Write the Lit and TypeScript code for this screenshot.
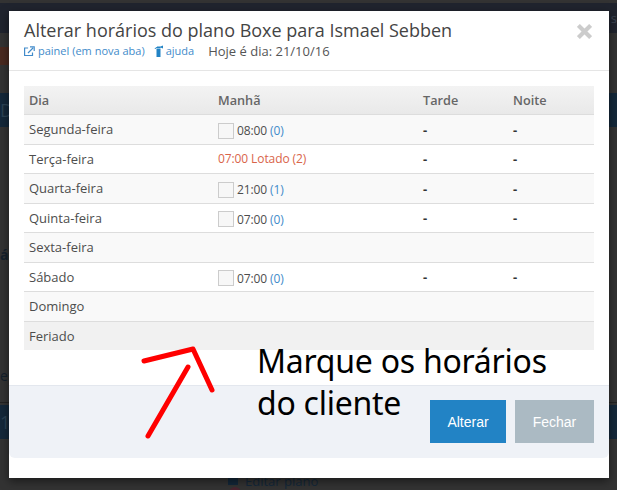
import { LitElement, html, css } from "lit";
import { customElement } from "lit/decorators.js";

type Row = { day: string; slot?: [string, string]; full?: string; dashes?: boolean };

const rows: Row[] = [
  { day: "Segunda-feira", slot: ["08:00", "(0)"], dashes: true },
  { day: "Terça-feira", full: "07:00 Lotado (2)", dashes: true },
  { day: "Quarta-feira", slot: ["21:00", "(1)"], dashes: true },
  { day: "Quinta-feira", slot: ["07:00", "(0)"], dashes: true },
  { day: "Sexta-feira" },
  { day: "Sábado", slot: ["07:00", "(0)"], dashes: true },
  { day: "Domingo" },
  { day: "Feriado" },
];

@customElement("app-root")
export class AppRoot extends LitElement {
  static styles = css`
    :host {
      display: block;
      position: relative;
      width: 617px;
      height: 490px;
      overflow: hidden;
      background: #333;
      font-family: "Open Sans", sans-serif;
      color: #4d4d4d;
    }
    /* page behind the dimmed overlay */
    .back {
      display: flex;
      flex-direction: column;
      height: 490px;
    }
    .top {
      height: 30px;
      margin-top: 3px;
      background: #20242e;
      flex: none;
      text-align: right;
      color: #3d4452;
      font-size: 13px;
      line-height: 30px;
    }
    .mark {
      width: 9px;
      height: 18px;
      margin-top: 14px;
      background: #4a2a20;
      flex: none;
    }
    .band {
      height: 34px;
      background: #14283a;
      flex: none;
      color: #2b4254;
      font-size: 18px;
      line-height: 34px;
    }
    .band.one {
      margin-top: 28px;
    }
    .rule {
      height: 1px;
      margin-top: 275px;
      background: #222;
      flex: none;
    }
    .band.two {
      margin-top: 2px;
    }
    .ghost {
      position: absolute;
      left: 0;
      font-size: 14px;
      color: #14202c;
    }
    .ghost.a {
      top: 245px;
      font-weight: 700;
    }
    .ghost.b {
      top: 366px;
    }
    .peek {
      position: absolute;
      left: 228px;
      top: 472px;
      display: flex;
      align-items: center;
      gap: 7px;
      font-size: 13px;
      color: #14283a;
    }
    .peek i {
      width: 10px;
      height: 8px;
      background: #14283a;
    }
    .dot {
      position: absolute;
      left: 229px;
      top: 487px;
      width: 12px;
      height: 12px;
      border-radius: 50%;
      background: #4a2530;
    }
    .modal {
      position: absolute;
      left: 9px;
      top: 11px;
      width: 600px;
      height: 467px;
      background: #fff;
      box-shadow: 0 3px 9px rgba(0, 0, 0, 0.5);
      display: flex;
      flex-direction: column;
    }
    .head {
      height: 60px;
      box-sizing: border-box;
      padding: 7px 15px 0;
      border-bottom: 1px solid #e5e5e5;
      position: relative;
    }
    h4 {
      margin: 0;
      font-size: 18px;
      line-height: 24px;
      font-weight: 400;
      color: #444;
    }
    .links {
      display: flex;
      align-items: center;
      font-size: 11px;
      line-height: 16px;
      margin-top: 1px;
    }
    .links a {
      display: flex;
      align-items: center;
      gap: 3px;
      color: #428bca;
      margin-right: 9px;
    }
    .links span {
      font-size: 13px;
      color: #555;
      margin-left: 5px;
    }
    .close {
      position: absolute;
      right: 17px;
      top: 13px;
    }
    .body {
      flex: 1;
      padding: 15px 15px 0;
    }
    .table {
      display: grid;
      grid-template-columns: 189px 205px 90px 86px;
      font-size: 13px;
    }
    .hd {
      height: 28.2px;
      line-height: 28px;
      padding-left: 5px;
      font-weight: 600;
      font-size: 12.7px;
      color: #666;
      background: linear-gradient(#f3f3f3, #e9e9e9);
      border-bottom: 1px solid #ddd;
    }
    .row {
      display: grid;
      grid-column: 1 / -1;
      grid-template-columns: subgrid;
      height: 28.5px;
      align-items: center;
      border-bottom: 1px solid #ddd;
    }
    .row.odd {
      background: #f9f9f9;
    }
    .row.last {
      background: #f1f1f1;
      border-bottom: 0;
    }
    .row > div {
      padding-left: 5px;
    }
    .slot {
      display: flex;
      align-items: center;
      gap: 3px;
      font-size: 12px;
      letter-spacing: -0.1px;
      padding-top: 3px;
    }
    .box {
      width: 14px;
      height: 14px;
      border: 1px solid #ccc;
      background: #f7f7f7;
    }
    .count {
      color: #428bca;
    }
    .full {
      color: #d9644a;
      font-size: 12px;
      letter-spacing: -0.1px;
    }
    .dash {
      font-weight: 700;
      color: #333;
      padding-top: 1px;
    }
    .foot {
      height: 73px;
      margin-bottom: 20px;
      box-sizing: border-box;
      padding: 14px 15px 0;
      background: #eff2f7;
      border-top: 1px solid #e3e7ee;
      border-radius: 0 0 6px 6px;
      display: flex;
      justify-content: flex-end;
      gap: 9px;
    }
    button {
      height: 43px;
      border: 0;
      padding: 0;
      color: #fff;
      font: 14px "Liberation Sans", sans-serif;
    }
    .save {
      width: 76px;
      background: #2283c5;
    }
    .cancel {
      width: 79px;
      background: #abbac3;
    }
    .note {
      position: absolute;
      left: 257px;
      top: 340px;
      font-family: "Noto Sans", sans-serif;
      font-size: 32px;
      line-height: 42px;
      color: #000;
      letter-spacing: -0.25px;
    }
    .arrow {
      position: absolute;
      left: 0;
      top: 0;
    }
  `;

  render() {
    return html`
      <div class="back">
        <div class="top">s</div>
        <div class="mark"></div>
        <div class="band one">Di</div>
        <div class="rule"></div>
        <div class="band two">1</div>
      </div>
      <div class="ghost a">á</div>
      <div class="ghost b">e C</div>
      <div class="peek"><i></i>Editar plano</div>
      <div class="dot"></div>
      <div class="modal">
        <div class="head">
          <h4>Alterar horários do plano Boxe para Ismael Sebben</h4>
          <div class="links">
            <a>
              <svg width="11" height="11" viewBox="0 0 11 11" fill="none" stroke="#428bca" stroke-width="1.2">
                <path d="M8.5 6.5v3h-7.9v-7.5h3.5" />
                <path d="M4 7l5-5M6 .9h4.2v4.2" />
              </svg>
              painel (em nova aba)
            </a>
            <a>
              <svg width="9" height="12" viewBox="0 0 9 12" fill="#2283c5">
                <path d="M2.5 4h4v8h-4zM3 1.5h3.500v2h-3.500zM6.500 1.500l2.500-1v3l-2.500-1zM3 1.800l-2.500 1.700.6.6 1.900-1.200z" />
              </svg>
              ajuda
            </a>
            <span>Hoje é dia: 21/10/16</span>
          </div>
          <svg class="close" width="15" height="15" viewBox="0 0 16 16" stroke="#ccc" stroke-width="4.400">
            <path d="M1.500 1.500l13 13M14.500 1.500l-13 13" />
          </svg>
        </div>
        <div class="body">
          <div class="table">
            <div class="hd">Dia</div>
            <div class="hd">Manhã</div>
            <div class="hd">Tarde</div>
            <div class="hd">Noite</div>
            ${rows.map((r, i) => this.renderRow(r, i))}
          </div>
        </div>
        <div class="foot">
          <button class="save">Alterar</button>
          <button class="cancel">Fechar</button>
        </div>
      </div>
      <div class="note">Marque os horários<br />do cliente</div>
      <svg class="arrow" width="617" height="490" fill="none" stroke="#f00" stroke-width="5" stroke-linecap="round" stroke-linejoin="round">
        <path d="M144 361L193 349L212 390" />
        <path d="M188 367L148 436" />
      </svg>
    `;
  }

  renderRow(r: Row, i: number) {
    const cls = i === rows.length - 1 ? "row last" : i % 2 === 0 ? "row odd" : "row";
    return html`
      <div class=${cls}>
        <div>${r.day}</div>
        <div>
          ${r.slot
            ? html`<div class="slot"><i class="box"></i>${r.slot[0]} <span class="count">${r.slot[1]}</span></div>`
            : r.full
              ? html`<div class="full">${r.full}</div>`
              : ""}
        </div>
        <div class="dash">${r.dashes ? "-" : ""}</div>
        <div class="dash">${r.dashes ? "-" : ""}</div>
      </div>
    `;
  }
}
